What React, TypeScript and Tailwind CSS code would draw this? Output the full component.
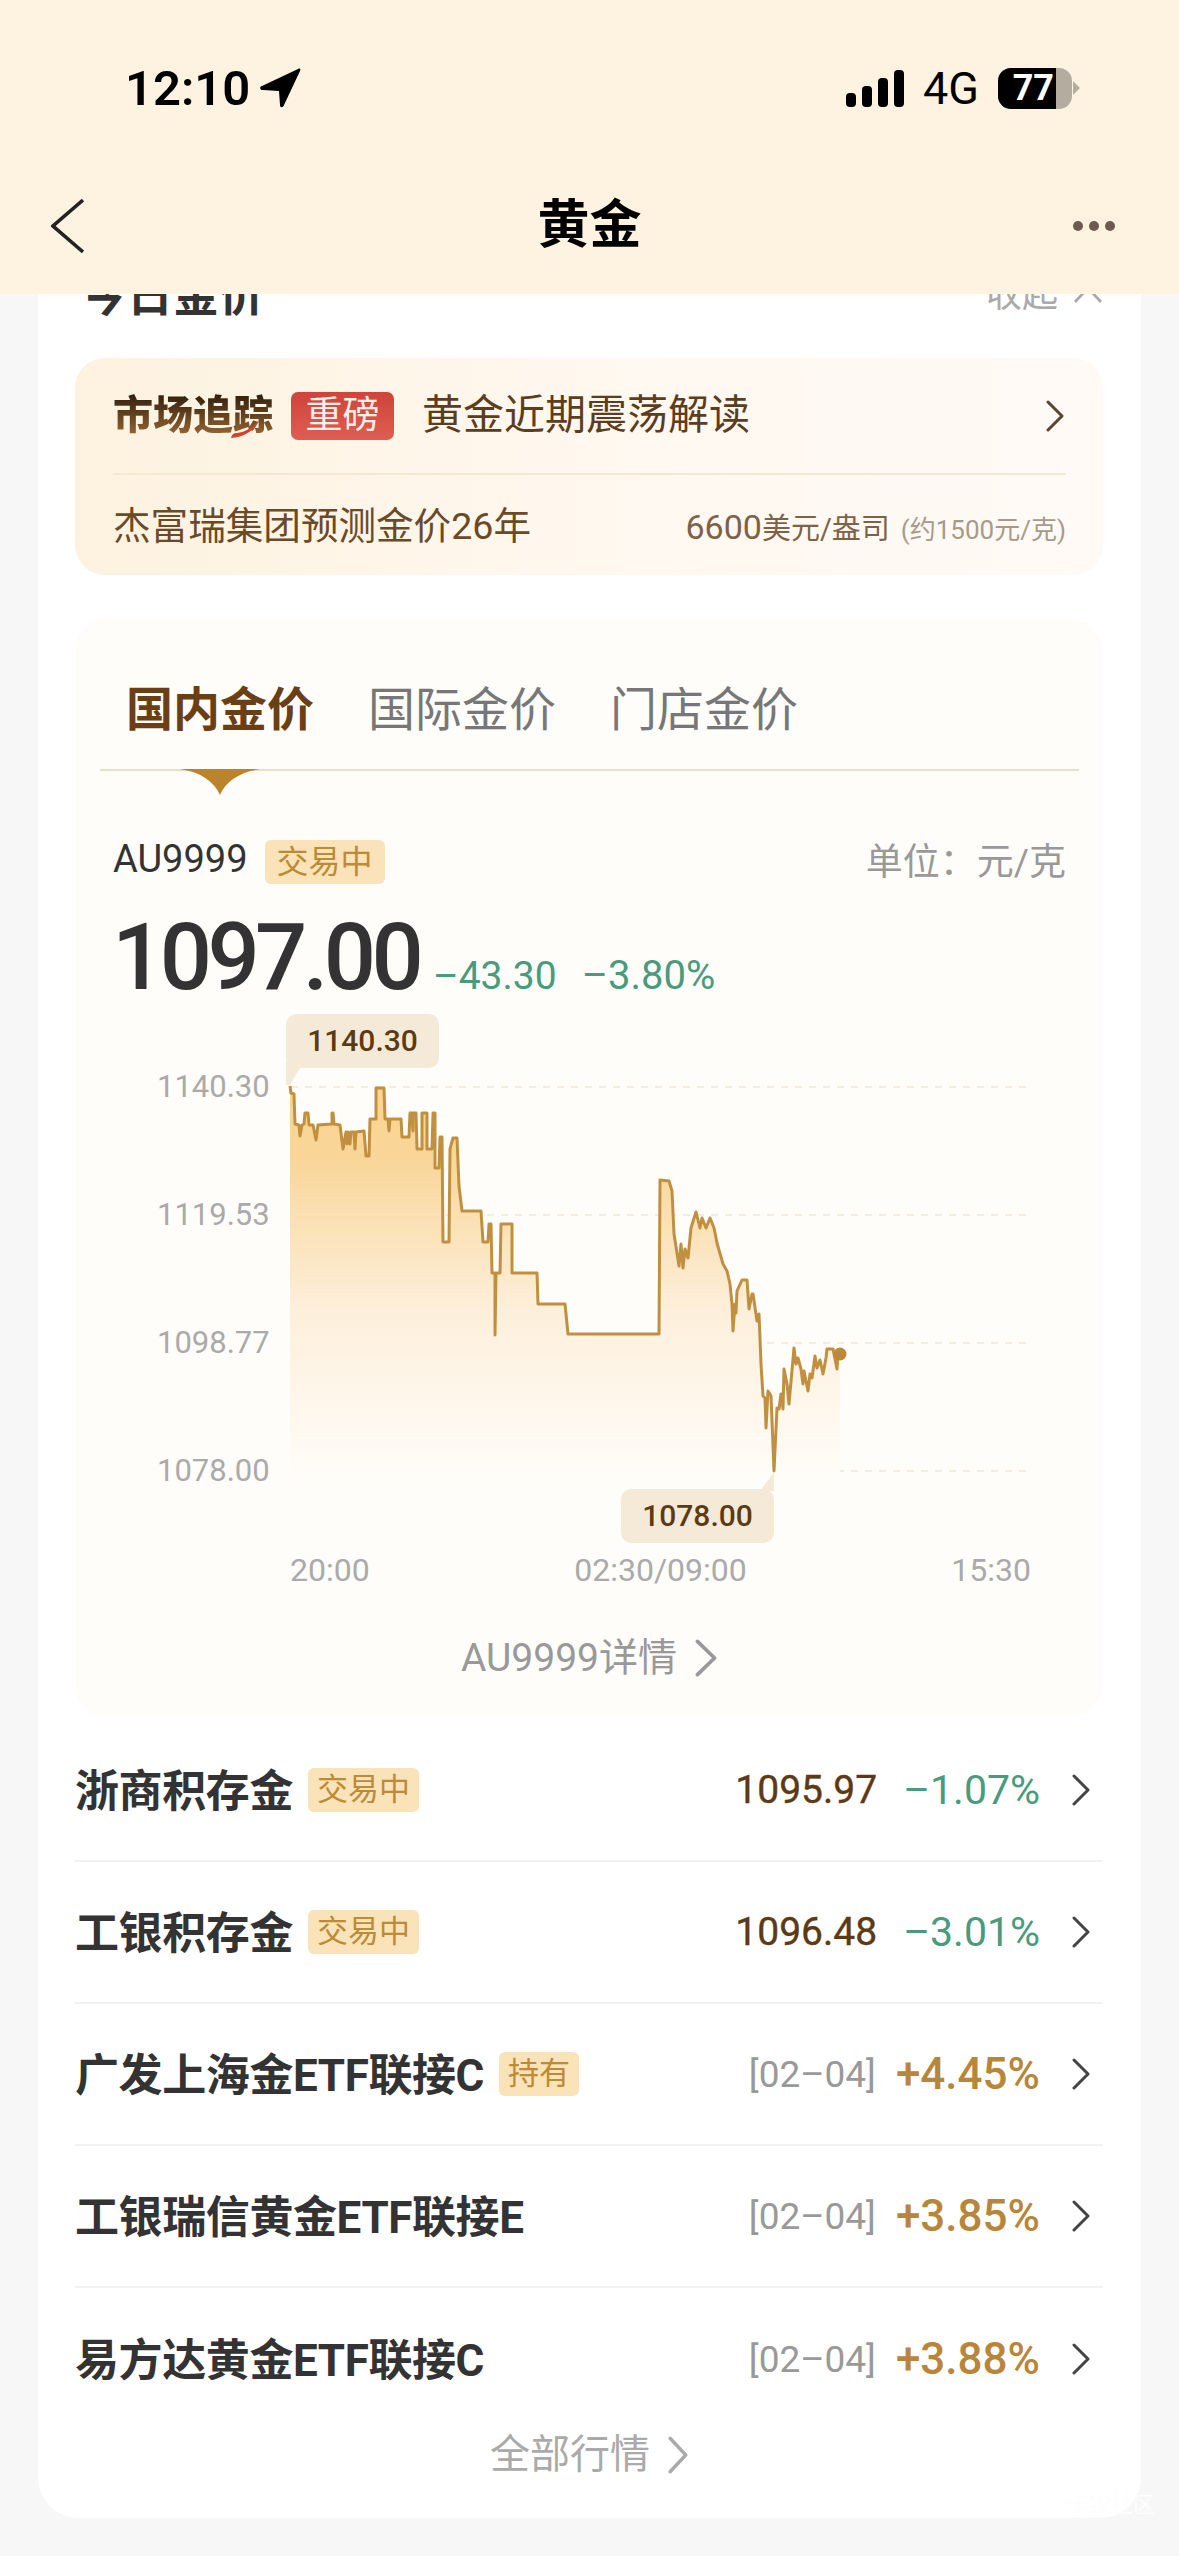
import { ReactNode } from 'react';

const FONT = 'font-[Roboto,"Noto_Sans_CJK_SC",sans-serif]';

const linePoints =
  '290,1085 291,1092 294,1093 295,1123 299,1124 300,1135 302,1124 304,1123 305,1112 308,1112 309,1124 313,1124 316,1139 318,1124 332,1123 332,1112 333,1112 334,1123 340,1124 343,1148 346,1131 347,1143 348,1131 350,1143 351,1131 354,1131 355,1148 356,1131 364,1130 366,1155 369,1155 370,1118 376,1118 376,1087 384,1087 385,1118 388,1118 389,1130 390,1118 401,1118 402,1136 409,1136 410,1112 412,1112 413,1130 413,1112 416,1112 417,1148 422,1148 422,1112 427,1112 427,1148 432,1148 433,1112 435,1112 435,1167 439,1167 440,1136 442,1136 443,1241 449,1241 450,1148 453,1137 457,1137 459,1185 462,1210 481,1210 483,1241 488,1241 489,1223 491,1223 492,1272 495,1272 495,1334 496,1272 500,1272 501,1223 512,1223 512,1272 537,1272 538,1303 565,1303 568,1333 659,1333 660,1179 669,1180 672,1190 674,1233 679,1265 681,1243 683,1267 685,1248 688,1257 691,1227 696,1211 700,1227 702,1217 706,1227 710,1217 714,1227 717,1242 723,1263 727,1270 730,1283 732,1303 733,1330 735,1303 736,1312 737,1290 742,1279 747,1279 749,1308 752,1293 753,1293 757,1320 759,1313 761,1363 763,1395 765,1397 766,1427 768,1390 771,1395 774,1470 777,1407 779,1408 781,1393 783,1408 784,1368 787,1383 789,1403 794,1347 796,1363 798,1357 801,1368 803,1383 804,1370 808,1390 810,1373 812,1377 815,1355 817,1367 820,1359 823,1373 826,1357 827,1348 833,1348 837,1368 838,1353';

const funds = [
  { name: '浙商积存金', tag: '交易中', price: '1095.97', pct: '–1.07%', up: false },
  { name: '工银积存金', tag: '交易中', price: '1096.48', pct: '–3.01%', up: false },
  { name: '广发上海金ETF联接C', tag: '持有', date: '[02–04]', pct: '+4.45%', up: true },
  { name: '工银瑞信黄金ETF联接E', date: '[02–04]', pct: '+3.85%', up: true },
  { name: '易方达黄金ETF联接C', date: '[02–04]', pct: '+3.88%', up: true },
];

const Chevron = ({ className, color = '#444', w = 18, h = 32 }: { className?: string; color?: string; w?: number; h?: number }) => (
  <svg width={w} height={h} viewBox="0 0 18 32" fill="none" preserveAspectRatio="none" className={className}>
    <path d="M2 2 L16 16 L2 30" stroke={color} strokeWidth="3" strokeLinecap="round" strokeLinejoin="round" />
  </svg>
);

const Tag = ({ children }: { children: ReactNode }) => (
  <span className="flex h-[44px] items-center rounded-[6px] bg-[#fae3b8] px-[9px] text-[31px] text-[#bd8a36]">{children}</span>
);

const StatusBar = () => (
  <div className="flex h-[176px] items-center justify-between pl-[125px] pr-[98px] text-black">
    <div className="flex items-center gap-[10px]">
      <span className="text-[49px] font-semibold leading-none">12:10</span>
      <svg width="41" height="40" viewBox="0 0 41 40">
        <path d="M38 1 C40 0 41 1 40 3 L24 37 C23 40 20 40 20 37 L19 23 L3 22 C0 22 -1 19 2 18 Z" fill="#000" />
      </svg>
    </div>
    <div className="flex items-center">
      <svg width="58" height="37" viewBox="0 0 58 37">
        <rect x="0" y="23" width="10" height="14" rx="4" fill="#000" />
        <rect x="16" y="16" width="10" height="21" rx="4" fill="#000" />
        <rect x="32" y="8" width="10" height="29" rx="4" fill="#000" />
        <rect x="48" y="0" width="10" height="37" rx="4" fill="#000" />
      </svg>
      <span className="ml-[19px] w-[56px] text-[45px] leading-none">4G</span>
      <div className="ml-[19px] flex h-[41px] w-[74px] overflow-hidden rounded-[13px] bg-[#b5aca0]">
        <div className="flex w-[58px] items-center justify-end bg-black pr-[2px] text-[36px] font-bold leading-none text-white">77</div>
      </div>
      <svg width="8" height="14" viewBox="0 0 8 14" className="ml-[1px]">
        <path d="M0 0 L7 7 L0 14 Z" fill="#b5aca0" />
      </svg>
    </div>
  </div>
);

const NavBar = () => (
  <div className="grid h-[100px] grid-cols-[1fr_auto_1fr] items-center px-[64px]">
    <svg width="33" height="56" viewBox="0 0 33 56" fill="none" className="-ml-[13px]">
      <path d="M32 2 L2 28 L32 54" stroke="#222" strokeWidth="3.6" />
    </svg>
    <span className="text-[52px] font-bold leading-none text-black">黄金</span>
    <div className="flex justify-end gap-[6px]">
      <span className="h-[10px] w-[10px] rounded-full bg-[#6b5b4e]" />
      <span className="h-[10px] w-[10px] rounded-full bg-[#6b5b4e]" />
      <span className="h-[10px] w-[10px] rounded-full bg-[#6b5b4e]" />
    </div>
  </div>
);

const MarketCard = () => (
  <div className="mt-[33px] rounded-[30px] bg-gradient-to-r from-[#fdf2df] via-[#fff8ef] to-[#fffaf6] pl-[38px] pr-[37px]">
    <div className="flex h-[117px] items-center border-b-2 border-[#f5e8d2] pr-[2px]">
      <div className="relative">
        <span className="bg-gradient-to-b from-[#2e1c0c] to-[#a06e36] bg-clip-text text-[40px] font-black leading-none text-transparent">市场追踪</span>
        <svg width="30" height="19" viewBox="0 0 30 19" className="absolute bottom-[-3px] right-[12px]">
          <path d="M28 0 C24 10 14 17 0 18 C1 14 3 13 6 13 C15 12 22 7 28 0 Z" fill="#d8402c" />
        </svg>
      </div>
      <span className="ml-[18px] flex h-[48px] w-[103px] items-center justify-center rounded-[7px] bg-gradient-to-b from-[#cf433a] to-[#de5d52] text-[37px] leading-none text-[#fdeee8]">重磅</span>
      <span className="ml-[28px] text-[41px] leading-none text-[#5c3d1e]">黄金近期震荡解读</span>
      <Chevron className="ml-auto" color="#5a4630" />
    </div>
    <div className="flex h-[100px] items-center justify-between pt-[4px] text-[#6b4a28]">
      <span className="text-[37.6px] leading-none">杰富瑞集团预测金价26年</span>
      <span className="flex items-baseline leading-none text-[#7e6248]">
        <span className="text-[34px]">6600</span>
        <span className="text-[29px]">美元/盎司</span>
        <span className="ml-[11px] text-[26px] text-[#a89a8a]">(约1500元/克)</span>
      </span>
    </div>
  </div>
);

const PriceChart = () => (
  <div className="mt-[69px] flex pl-[82px]">
    <div className="flex h-[424px] w-[111px] flex-col justify-between text-right text-[31px] leading-[40px] text-[#aaa]">
      <span>1140.30</span>
      <span>1119.53</span>
      <span>1098.77</span>
      <span>1078.00</span>
    </div>
    <div className="relative ml-[22px] h-[424px] w-[741px]">
      <svg width="741" height="424" viewBox="290 1066 741 424" fill="none" className="overflow-visible">
        <defs>
          <linearGradient id="goldFill" gradientUnits="userSpaceOnUse" x1="0" y1="1100" x2="0" y2="1480">
            <stop offset="0" stopColor="#f9d492" />
            <stop offset="0.15" stopColor="#f9d698" />
            <stop offset="0.55" stopColor="#fdefdb" />
            <stop offset="1" stopColor="#fffdf9" />
          </linearGradient>
        </defs>
        {[1086, 1214, 1342, 1470].map(y => (
          <line key={y} x1="291" x2="1031" y1={y} y2={y} stroke="#f3ece0" strokeWidth="2" strokeDasharray="7 7" />
        ))}
        <polygon points={`${linePoints} 840,1353 840,1480 290,1480`} fill="url(#goldFill)" />
        <polyline points={linePoints} stroke="#c09040" strokeWidth="3" strokeLinejoin="round" />
        <circle cx="840" cy="1353" r="6.5" fill="#bd8a3c" />
        <path d="M286 1060 L304 1060 L290 1084 L286 1084 Z" fill="#f5ead8" />
        <path d="M774 1490 L760 1490 L774 1471 Z" fill="#f5ead8" />
      </svg>
      <div className="absolute left-[-4px] top-[-53px] flex h-[54px] w-[153px] items-center justify-center rounded-[10px] bg-[#f5ead8] text-[30px] font-medium leading-none text-[#5c3a14]">1140.30</div>
      <div className="absolute left-[331px] top-[422px] flex h-[54px] w-[153px] items-center justify-center rounded-[10px] bg-[#f5ead8] text-[30px] font-medium leading-none text-[#5c3a14]">1078.00</div>
    </div>
  </div>
);

const GoldPanel = () => (
  <div className="mt-[45px] rounded-[30px] bg-[#fffdf9] pb-[33px]">
    <div className="relative ml-[25px] mr-[24px] flex gap-[54px] border-b-2 border-[#ecdfc8] pb-[34px] pl-[26px] pt-[65px] text-[47px] leading-[50px] text-[#777]">
      <span className="font-bold text-[#6b3f16]">国内金价</span>
      <span>国际金价</span>
      <span>门店金价</span>
      <svg width="80" height="26" viewBox="0 0 80 26" className="absolute left-[80px] top-full">
        <path d="M0 0 L80 0 C60 3 46 12 40 26 C34 12 20 3 0 0 Z" fill="#b9842c" />
      </svg>
    </div>
    <div className="mt-[69px] flex h-[44px] items-center pl-[38px] pr-[37px]">
      <span className="-mt-[6px] text-[38px] leading-none text-[#333]">AU9999</span>
      <span className="ml-[17px] flex h-[44px] w-[120px] items-center justify-center rounded-[6px] bg-[#fae3b8] text-[32px] text-[#bd8a36]">交易中</span>
      <span className="ml-auto text-[37px] leading-none text-[#999]">单位：元/克</span>
    </div>
    <div className="mt-[34px] flex h-[80px] items-baseline pl-[37px]">
      <span className="text-[92px] font-medium leading-[80px] tracking-[-4.6px] text-[#333]">1097.00</span>
      <span className="ml-[14px] text-[39px] leading-none text-[#4a9a7e]">–43.30</span>
      <span className="ml-[25px] text-[40px] leading-none text-[#4a9a7e]">–3.80%</span>
    </div>
    <PriceChart />
    <div className="mt-[59px] flex justify-between pl-[215px] pr-[72px] text-[32px] leading-[40px] text-[#aaa]">
      <span>20:00</span>
      <span>02:30/09:00</span>
      <span>15:30</span>
    </div>
    <div className="mt-[43px] flex h-[50px] items-center justify-center gap-[18px] text-[39px] leading-none text-[#999]">
      <span>AU9999详情</span>
      <Chevron color="#999" w={22} h={38} />
    </div>
  </div>
);

const FundRow = ({ fund, last }: { fund: (typeof funds)[number]; last: boolean }) => (
  <div className={`flex h-[142px] items-center pr-[13px] ${last ? '' : 'border-b-2 border-[#f2f2f2]'}`}>
    <span className="mt-[4px] text-[44px] font-bold leading-none tracking-[-0.4px] text-[#333]">{fund.name}</span>
    {fund.tag && <span className="ml-[15px]"><Tag>{fund.tag}</Tag></span>}
    {fund.price && <span className="ml-auto text-[39px] leading-none text-[#5c3a14] [-webkit-text-stroke:0.4px_#5c3a14]">{fund.price}</span>}
    {fund.date && <span className="ml-auto text-[37px] leading-none text-[#999]">{fund.date}</span>}
    <span className={`leading-none ${fund.up ? 'ml-[20px] text-[44px] font-medium text-[#b8863a]' : 'ml-[26px] text-[41px] text-[#4a9a7e]'}`}>{fund.pct}</span>
    <Chevron className="ml-[32px]" />
  </div>
);

export default function App() {
  return (
    <div className={`flex h-[2556px] w-[1179px] flex-col overflow-hidden bg-[#f7f7f7] ${FONT}`}>
      <header className="h-[294px] shrink-0 bg-[#fef2e1]">
        <StatusBar />
        <NavBar />
      </header>
      <main className="relative flex-1 overflow-hidden px-[38px]">
        <div className="-mt-[29px] rounded-b-[40px] bg-white pb-[38px] pl-[37px] pr-[38px]">
          <div className="flex h-[60px] items-center justify-between">
            <span className="ml-[6px] text-[46px] font-bold leading-none text-[#333]">今日金价</span>
            <span className="flex items-center gap-[15px] text-[36px] leading-none text-[#aaa]">
              收起
              <svg width="30" height="18" viewBox="0 0 30 18" fill="none">
                <path d="M2 16 L15 2 L28 16" stroke="#aaa" strokeWidth="2.8" />
              </svg>
            </span>
          </div>
          <MarketCard />
          <GoldPanel />
          <div className="mt-[4px]">
            {funds.map((fund, i) => (
              <FundRow key={fund.name} fund={fund} last={i === funds.length - 1} />
            ))}
          </div>
          <div className="flex h-[50px] items-center justify-center gap-[18px] text-[40px] leading-none text-[#aaa]">
            <span>全部行情</span>
            <Chevron color="#aaa" w={20} h={38} />
          </div>
        </div>
        <span className="absolute bottom-[40px] right-[24px] text-[22px] leading-none text-[#fdfdfd]">卡农社区</span>
      </main>
    </div>
  );
}
